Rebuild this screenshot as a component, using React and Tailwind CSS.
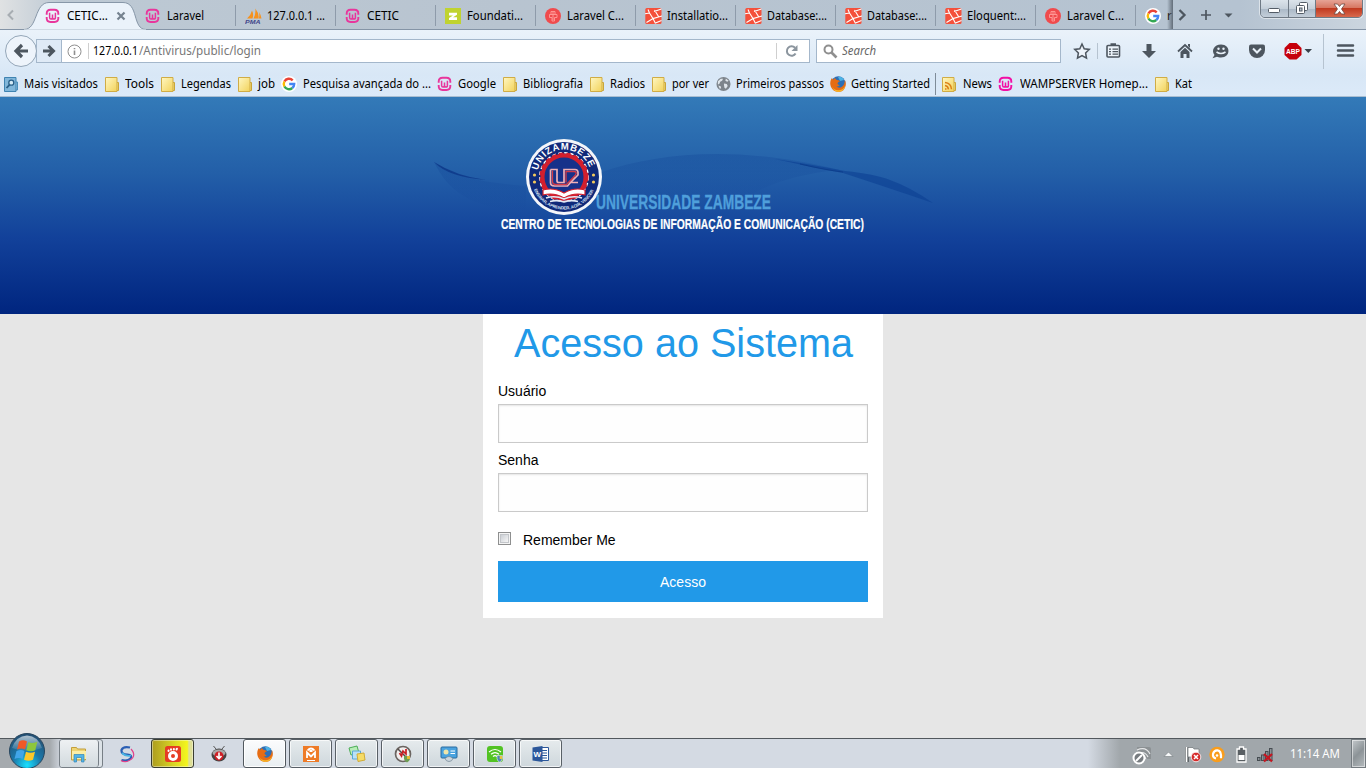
import { useLayoutEffect, useRef } from "react";

/* Text set to an exact advance width, by letter spacing or by condensing. */
function Fit({ w, spaced, stretch = 1, className = "", children }) {
  const ref = useRef(null);
  useLayoutEffect(() => {
    const el = ref.current;
    el.style.letterSpacing = "0px";
    el.style.transform = "none";
    const natural = el.getBoundingClientRect().width;
    if (!spaced) el.style.transform = `scale(${w / natural}, ${stretch})`;
    else el.style.letterSpacing = `${(w - natural) / String(children).length}px`;
  }, [w, spaced, stretch, children]);
  return (
    <span className={`block shrink-0 ${className}`} style={{ width: w }}>
      <span ref={ref} className="inline-block origin-left whitespace-nowrap">{children}</span>
    </span>
  );
}

function Wamp({ color = "#e8369c" }) {
  return (
    <svg width="16" height="16" viewBox="0 0 16 16" className="shrink-0" fill="none" stroke={color}>
      <path d="M1.700 6.800V5.500Q1.700 1.800 5.500 1.800h4Q13.300 1.800 13.300 5.500V6.800M1.700 9V10.300Q1.700 14 5.500 14h4Q13.300 14 13.300 10.300V9" strokeWidth="1.900" />
      <path d="M4.600 4.800V9.500q0 1.500 1.400 1.500t1.500-1.500V6.500V9.500q0 1.500 1.500 1.500t1.400-1.500V4.800" strokeWidth="1.500" />
    </svg>
  );
}
function GoogleG() {
  return (
    <svg width="16" height="16" viewBox="0 0 16 16" className="shrink-0" fill="none" strokeWidth="2.4">
      <circle cx="8" cy="8" r="8" fill="#fff" />
      <path d="M11.700 4.300A5.200 5.200 0 0 0 3.400 5.500" stroke="#ea4335" />
      <path d="M3.400 5.500a5.200 5.200 0 0 0 0 5" stroke="#fbbc05" />
      <path d="M3.400 10.500a5.200 5.200 0 0 0 7.900 1.500" stroke="#34a853" />
      <path d="M11.300 12A5.200 5.200 0 0 0 13.200 8H8.200" stroke="#4285f4" />
    </svg>
  );
}
function Pma() {
  return (
    <svg width="17" height="16" viewBox="0 0 17 16" className="shrink-0">
      <path d="M2 10.500Q6 7 7 2.500q2 4 .5 8zM8.500 10.500Q11 6 10.300 0.500q4 5 3.200 10zM13.800 10.500q1-3 .2-6.500 2 3 2.500 6.500z" fill="#f6921e" />
      <text x="0" y="16" fontSize="5.500" fontWeight="700" fontStyle="italic" textLength="15.500" lengthAdjust="spacingAndGlyphs" fontFamily="Liberation Sans, sans-serif" fill="#42468a">PMA</text>
    </svg>
  );
}
function Zurb() {
  return (
    <svg width="16" height="16" viewBox="0 0 16 16" className="shrink-0">
      <rect width="16" height="16" fill="#c0d330" />
      <path d="M4 4.800h8v2L8 9.300h4V12H4V10l4-2.600H4z" fill="#fff" />
    </svg>
  );
}
function LaraCasts() {
  return (
    <svg width="16" height="16" viewBox="0 0 16 16" className="shrink-0">
      <circle cx="8" cy="8" r="8" fill="#f04b4d" />
      <path d="M6 3.500h4v3h2v3H9.500V13H7V9.500H4.500v-3H6zM6 6.500h4M8 4v8" fill="none" stroke="#ff9d9a" strokeWidth=".9" />
    </svg>
  );
}
function Laravel() {
  return (
    <svg width="17" height="16" viewBox="0 0 17 16" className="shrink-0">
      <rect x=".3" y="0" width="16.200" height="16" rx="1.500" fill="#f4503b" />
      <path d="M0 5.800l4.500-.8 3.500 5.500 9-2.500M1.500 14.500l6.500-4 2.500 5M10.500 15l6-2.500M9.500 2l4 6.500M9 3.500L16.500 1M4.500 5l-1.500-3.500" fill="none" stroke="#fff" strokeWidth="1.100" />
    </svg>
  );
}
function Folder({ rss }) {
  return (
    <svg width="15" height="17" viewBox="0 0 15 17" className="shrink-0">
      <defs>
        <linearGradient id="fold" x1="0" y1="0" x2="1" y2="1">
          <stop offset="0" stopColor="#fff7c2" /><stop offset="1" stopColor="#f2d25a" />
        </linearGradient>
      </defs>
      <path d="M11 6.500h2.500v8H11z" fill="#f7e27c" stroke="#c9a53a" />
      <path d="M.5 1.500h11.500v14H.5z" fill="url(#fold)" stroke="#d0ac46" />
      {rss && <path d="M3 13h1.500M3 9.500q3 .3 3.500 3.800M3 6.500q6 .5 6.500 6.800" fill="none" stroke="#dd7f16" strokeWidth="1.500" />}
    </svg>
  );
}
function Visited() {
  return (
    <svg width="15" height="17" viewBox="0 0 15 17" className="shrink-0">
      <path d="M11 6h2.500v8H11z" fill="#9cc9e6" stroke="#4c8fbb" />
      <path d="M.5 1.500h11.500v14H.5z" fill="#80b6da" stroke="#3f83b1" />
      <circle cx="7.300" cy="6.700" r="2.500" fill="#d4eaf6" stroke="#285f88" strokeWidth="1.300" />
      <path d="M5.500 8.800L2.500 12" stroke="#285f88" strokeWidth="1.800" />
    </svg>
  );
}
function Globe() {
  return (
    <svg width="15" height="16" viewBox="0 0 16 16" className="shrink-0">
      <circle cx="8" cy="8" r="7.500" fill="#7d848b" />
      <path d="M2 5l3-2.500 2.500 0-1 2-2 1-1 2.500-1.500.5zM10.500 2l3 2.500-1.500 1-2-1zM8.500 7.500l3 .5 1 2-2 3-1.500-1-.5-3zM2.500 9.500l2.500 1 .5 2-1.500.5z" fill="#dfe5ea" />
    </svg>
  );
}
function Firefox() {
  return (
    <svg width="16" height="16" viewBox="0 0 16 16" className="shrink-0">
      <circle cx="8.300" cy="7.300" r="7" fill="#2d6fb6" />
      <path d="M8 1q4-1 6 3l-4 1z" fill="#4db2e4" />
      <path d="M1.500 2.200Q-.8 7 1 11q2.300 5 7.500 4.900 6-.3 7.200-6.400.5-3-.9-5.700.2 5-3.200 7.300-3 1.500-5.200-.8 2 .5 3.300-1-1.600-.1-2.300-1.800.8-1.800 2.600-2.200Q8.500 4 6.300 3.700 5.200 2.800 5 2q-1.200.8-1.500 1.700z" fill="#e66c14" />
      <path d="M2 10q1.500 4.500 7 4.300 4.500-.3 6.200-4.500-.5 5.500-6.700 6.100Q3 15.500 2 10z" fill="#f7b52a" />
    </svg>
  );
}

const tabs = [
  ["CETIC...", 41, Wamp], ["Laravel", 37, Wamp], ["127.0.0.1 ...", 58, Pma], ["CETIC", 32, Wamp],
  ["Foundati...", 56, Zurb], ["Laravel C...", 57, LaraCasts], ["Installatio...", 61, Laravel],
  ["Database:...", 60, Laravel], ["Database:...", 60, Laravel], ["Eloquent:...", 59, Laravel], ["Laravel C...", 57, LaraCasts],
];

function Tab({ label, width, Icon, active, index }) {
  return (
    <div className="relative flex h-[30px] w-[100px] shrink-0 items-center gap-[5px] pl-[9px] pt-[2px]">
      <span className="flex w-[17px] shrink-0"><Icon /></span>
      <Fit w={width}>{label}</Fit>
      {active && (
        <svg width="10" height="10" viewBox="0 0 10 10" className="ml-[3px] shrink-0"><path d="M1.500 1.500l7 7M8.500 1.500l-7 7" stroke="#75828f" strokeWidth="2.200" /></svg>
      )}
      {index > 0 && <span className="absolute right-0 top-[5px] h-[21px] w-px bg-[#8e9baa]" />}
    </div>
  );
}

function TabStrip() {
  return (
    <div className="relative flex h-[30px] shrink-0 border-b border-[#8494a6] bg-[linear-gradient(90deg,#e0e2e3_0px,#bdc9d4_60px,#b8c4d0_500px,#b5c3d1_1240px,#cbd5df_1366px)]">
      <svg width="125" height="30" viewBox="0 0 125 30" className="absolute left-[24px] top-0">
        <path d="M0 29.500C14 29.500 10 2.500 25 2.500H99C115 2.500 108 29.500 122 29.500" fill="#eaf2fa" stroke="#8797a8" />
        <path d="M0 30H122" stroke="#eaf2fa" strokeWidth="1" />
      </svg>
      <div className="flex w-[36px] items-center pl-[6px] pt-[1px]">
        <svg width="9" height="12" viewBox="0 0 9 12"><path d="M7 1.500L2.500 6 7 10.500" fill="none" stroke="#a7adb2" strokeWidth="2" /></svg>
      </div>
      {tabs.map(([label, width, Icon], i) => <Tab key={i} label={label} width={width} Icon={Icon} active={i === 0} index={i} />)}
      <div className="relative flex h-[30px] w-[37px] items-center gap-[6px] overflow-hidden pl-[9px] pt-[2px]">
        <GoogleG /><span>r</span>
        <span className="absolute right-0 top-0 h-[29px] w-[6px] bg-gradient-to-r from-transparent to-[#626d79]" />
      </div>
      <div className="flex flex-1 items-center pl-[4px]">
        <svg width="60" height="14" viewBox="0 0 60 14" fill="none" stroke="#4d565f" strokeWidth="2">
          <path d="M2.500 2l5 5-5 5" strokeWidth="2.300" /><path d="M24 7h10M29 2v10" strokeWidth="1.700" /><path d="M47.500 5.500h8l-4 4z" fill="#4d565f" stroke="none" />
        </svg>
      </div>
      <div className="absolute left-[1260px] top-[-1px] flex h-[19px] w-[103px] overflow-hidden rounded-b-[5px] border border-[#6f7a85] shadow-[0_0_0_1px_rgba(255,255,255,0.5)]">
        <div className="flex w-[28px] items-center justify-center border-r border-[#6f7a85] bg-[linear-gradient(#dbe3ea,#c5d0da_50%,#aab8c6_51%,#c3ced9)]">
          <svg width="13" height="6" className="mt-[4px]"><rect x=".5" y=".5" width="11" height="4" rx="1" fill="#fff" stroke="#535c66" /></svg>
        </div>
        <div className="flex w-[27px] items-center justify-center border-r border-[#6f7a85] bg-[linear-gradient(#dbe3ea,#c5d0da_50%,#aab8c6_51%,#c3ced9)]">
          <svg width="13" height="13" viewBox="0 0 13 13" fill="#fff" stroke="#535c66"><rect x="3.500" y=".5" width="8" height="8" rx="1" /><rect x=".5" y="3.500" width="8" height="8" rx="1" /><rect x="3.500" y="6" width="2.500" height="3" fill="#b6c2ce" /></svg>
        </div>
        <div className="flex flex-1 items-center justify-center bg-[linear-gradient(#e6a395,#d77762_45%,#c13a20_50%,#d8694d)]">
          <svg width="13" height="12" viewBox="0 0 13 12"><path d="M1 1h3.500l2 2.500 2-2.500H12L8.500 6l3.500 5H8.500l-2-2.500-2 2.500H1l3.500-5z" fill="#fff" stroke="#6c4640" strokeWidth=".8" /></svg>
        </div>
      </div>
    </div>
  );
}

function Toolbar() {
  return (
    <div className="flex h-[42px] shrink-0 items-center">
      <div className="relative ml-[36px] flex h-[24px] w-[25px] items-center border border-r-0 border-[#a4b7cb] bg-[#dfeaf6] pl-[5px]">
        <svg width="14" height="14" viewBox="0 0 14 14"><path d="M1 7h9M6.500 2l5 5-5 5" fill="none" stroke="#4d565f" strokeWidth="3" /></svg>
        <div className="absolute left-[-32px] top-[-5px] flex h-[32px] w-[32px] items-center justify-center rounded-full border border-[#94a6b8] bg-[#eef4fb]">
          <svg width="16" height="16" viewBox="0 0 16 16"><path d="M15 8H4M9 2L3 8l6 6" fill="none" stroke="#4d565f" strokeWidth="3.200" /></svg>
        </div>
      </div>
      <div className="flex h-[24px] w-[749px] items-center border border-[#a4b7cb] bg-white pl-[5px]">
        <svg width="15" height="15" viewBox="0 0 15 15" fill="none" stroke="#8f8f8f"><circle cx="7.500" cy="7.500" r="6.500" /><path d="M7.500 6.500V11M7.500 4v1.300" strokeWidth="1.600" /></svg>
        <span className="ml-[6px] h-[16px] w-px bg-[#cfcfcf]" />
        <Fit w={45} className="ml-[4px]">127.0.0.1</Fit>
        <Fit w={122} className="ml-px text-[#777]">/Antivirus/public/login</Fit>
        <span className="ml-auto h-[16px] w-px bg-[#cfcfcf]" />
        <svg width="32" height="14" viewBox="0 0 32 14"><path d="M18.600 9.500A4.700 4.700 0 1 1 18 3.800" fill="none" stroke="#8b959e" strokeWidth="2" /><path d="M20.500 1v6h-6z" fill="#8b959e" /></svg>
      </div>
      <div className="ml-[6px] flex h-[24px] w-[245px] items-center border border-[#a4b7cb] bg-white pl-[6px]">
        <svg width="15" height="15" viewBox="0 0 15 15" fill="none" stroke="#8f8f8f"><circle cx="5.500" cy="5.500" r="4" strokeWidth="2" /><path d="M8.500 8.500l5 5" strokeWidth="2.700" /></svg>
        <Fit w={34} className="ml-[4px] italic text-[#666]">Search</Fit>
      </div>
      <svg width="305" height="40" viewBox="1061 30 305 40" className="shrink-0">
        <path d="M1082 43l2.200 4.700 5.100.7-3.700 3.600.9 5.100-4.500-2.500-4.500 2.500.9-5.100-3.700-3.600 5.100-.7z" fill="#eef4fb" stroke="#4d565f" strokeWidth="1.500" />
        <path d="M1097.500 42v16M1323.500 33v35" stroke="#b6c3d0" />
        <g fill="none" stroke="#4d565f"><rect x="1107" y="44.500" width="12.500" height="11.500" rx="1" strokeWidth="1.600" fill="#edf4fb" /><path d="M1110.500 43.500h5.500" strokeWidth="2.500" /><path d="M1109 48.200h2M1112.500 48.200h5.500M1109 50.700h2M1112.500 50.700h5.500M1109 53.200h2M1112.500 53.200h5.500" strokeWidth="1.200" /></g>
        <path d="M1146.500 43h5v7h4.500l-7 7-7-7h4.500z" fill="#4d565f" />
        <path d="M1178 50.500l7-6.500 7 6.500" fill="none" stroke="#4d565f" strokeWidth="1.800" />
        <path d="M1180.500 51l4.500-4.200 4.500 4.200v6h-3v-4h-3v4h-3zM1188 43h2v4l-2-2z" fill="#4d565f" />
        <path d="M1221 43.500c10 0 10 13 0 13-2 0-3-.4-4-.8l-4.500 1.500 2-3.300c-3.500-4-.5-10.400 6.500-10.400z" fill="#4d565f" />
        <path d="M1216.500 51q4.500 3 9 0" fill="none" stroke="#e9f1f9" strokeWidth="1.600" /><circle cx="1218.500" cy="47.700" r="1.200" fill="#e9f1f9" /><circle cx="1223.500" cy="47.700" r="1.200" fill="#e9f1f9" />
        <path d="M1251 43.500h12q2 0 2 2v3.500a8 8 0 0 1-16 0v-3.500q0-2 2-2z" fill="#4d565f" /><path d="M1253 47.500l4 4 4-4" fill="none" stroke="#e9f1f9" strokeWidth="2" />
        <path d="M1289.500 42h7l5 5v7l-5 4.500h-7l-5-4.500v-7z" fill="#c5000b" />
        <text x="1286" y="53" textLength="14" lengthAdjust="spacingAndGlyphs" fontFamily="Liberation Sans, sans-serif" fontSize="7" fontWeight="700" fill="#fff">ABP</text>
        <path d="M1304.500 48h7.500l-3.700 4z" fill="#39424b" />
        <path d="M1338 44.500h15M1338 49.500h15M1338 54.500h15" stroke="#4d565f" strokeWidth="2.500" strokeLinecap="round" />
      </svg>
    </div>
  );
}

const bookmarks = [
  [Visited, 20, "Mais visitados", 74, 7], [Folder, 20, "Tools", 29, 7], [Folder, 20, "Legendas", 50, 7], [Folder, 20, "job", 17, 6],
  [GoogleG, 22, "Pesquisa avançada do ...", 128, 6], [Wamp, 21, "Google", 38, 7], [Folder, 20, "Bibliografia", 60, 7],
  [Folder, 20, "Radios", 35, 7], [Folder, 20, "por ver", 37, 7], [Globe, 20, "Primeiros passos", 88, 6], [Firefox, 21, "Getting Started", 79, 5],
];
function Bookmark({ Icon, cell, label, width, gap, rss, color }) {
  return (
    <div className="flex shrink-0 items-center">
      <span className="flex shrink-0" style={{ width: cell }}>{rss ? <Icon rss /> : <Icon color={color} />}</span>
      <Fit w={width}>{label}</Fit>
      <span className="shrink-0" style={{ width: gap }} />
    </div>
  );
}

function Banner() {
  return (
    <header className="flex h-[217px] shrink-0 justify-center bg-[linear-gradient(#337ab8,#235fa8_35%,#12419a_65%,#00257f)]">
      <div className="relative mt-[20px] h-[130px] w-[500px]">
        <svg width="500" height="130" viewBox="433 117 500 130" className="absolute left-0 top-0">
          <defs>
            <linearGradient id="veil" x1="0" y1="0" x2="0" y2="1"><stop offset="0" stopColor="#0b3b90" stopOpacity=".25" /><stop offset="1" stopColor="#0b3b90" stopOpacity="0" /></linearGradient>
            <path id="seal-top" d="M537.700 170.500A27 27 0 0 1 590.300 170.500" />
            <path id="seal-bottom" d="M534 189.500A32.500 32.500 0 0 0 594 189.500" />
          </defs>
          <path d="M434 162C460 178 480 182 526 186v26C475 208 450 195 434 162z" fill="url(#veil)" />
          <path d="M434 162q22 14 52 18-38-3-52-18z" fill="#062b7f" opacity=".6" />
          <path d="M602 172C660 152 740 145 840 170q-60 5-100 31h-138z" fill="url(#veil)" />
          <path d="M775 159Q815 165 845 171Q875 174 890 180q20 7 43 23-50-17-90-30Q810 167 775 159z" fill="#0b3f93" opacity=".6" />
          <path d="M800 164q25 6 43 8" stroke="#093684" opacity=".6" fill="none" />
          <circle cx="564" cy="177" r="38" fill="#f4f6fa" />
          <circle cx="564" cy="177" r="35" fill="#10297a" />
          <circle cx="564" cy="177" r="24.300" fill="none" stroke="#fff" strokeWidth="1.400" strokeDasharray="3.500 2.500" />
          <circle cx="564" cy="177" r="21.500" fill="#16318a" stroke="#d31f2d" strokeWidth="4" />
          <circle cx="564" cy="177" r="23.500" fill="none" stroke="#d31f2d" strokeWidth="2" strokeDasharray="4.500 3" />
          <path d="M543 190q11-3 21 3 10-6 21-3v5q-11-3-21 3-10-6-21-3z" fill="#fff" stroke="#d31f2d" strokeWidth="1.200" />
          <path d="M546 198q9-3 18 1 9-4 18-1M550 201.500q7-2 14 .5 7-2.500 14-.5" fill="none" stroke="#e3e9f5" strokeWidth="1.600" />
          <path d="M550.500 169.500h6.500v11.500q0 1.500 2 1.500h5v-13h11q3 0 3 3v2.500l-7.500 7.500h7.500M550.500 169.500v13q0 3.500 4 3.500h13l8-9" fill="none" stroke="#eeb0b7" strokeWidth="1.700" />
          <path d="M552.500 170.500v11q0 3 3 3h11l9-9.500q2-3.500-1.500-3.500h-8v11" stroke="#d13b49" strokeWidth="1.300" fill="none" />
          <text fill="#fff" fontFamily="Liberation Sans, sans-serif" fontWeight="700" fontSize="9.500"><textPath href="#seal-top" textLength="69">UNIZAMBEZE</textPath></text>
          <text fill="#dbe4f5" fontFamily="Liberation Sans, sans-serif" fontWeight="700" fontSize="4.300"><textPath href="#seal-bottom" textLength="75">ENSINAR, APRENDER, AGIR, VENCER</textPath></text>
          <g fill="#f3c85b"><circle cx="534.500" cy="175" r="1.600" /><circle cx="534.500" cy="182" r="1.600" /><circle cx="593.500" cy="175" r="1.600" /><circle cx="593.500" cy="182" r="1.600" /></g>
        </svg>
        <div className="relative flex flex-col pt-[74px] font-['Liberation_Sans',sans-serif] font-bold">
          <Fit w={175} stretch={1.03} className="ml-[163px] text-[20px] leading-[22px] text-[#4f9fdb] [-webkit-text-stroke:0.3px_#4f9fdb]">UNIVERSIDADE ZAMBEZE</Fit>
          <Fit w={363} stretch={1.05} className="ml-[68px] mt-[2px] text-[14px] leading-[18px] text-white [-webkit-text-stroke:0.2px_white]">CENTRO DE TECNOLOGIAS DE INFORMAÇÃO E COMUNICAÇÃO (CETIC)</Fit>
        </div>
      </div>
    </header>
  );
}

function Login() {
  return (
    <main className="flex h-[424px] shrink-0 justify-center bg-[#e6e6e6] font-['Liberation_Sans',Arial,sans-serif] text-[14px] text-black">
      <form className="flex h-[304px] w-[400px] flex-col bg-white px-[15px]">
        <h1 className="mt-[1px] flex h-[55px] justify-center text-[39.375px] leading-[55px] text-[#2199e8]"><Fit w={339} stretch={1.04}>Acesso ao Sistema</Fit></h1>
        <label className="mt-[10px] h-[24px] leading-[23px]">Usuário</label>
        <input className="h-[39px] w-full border border-[#cacaca] bg-[#fefefe] shadow-[inset_0_1px_2px_rgba(10,10,10,0.1)]" />
        <label className="mt-[6px] h-[24px] leading-[23px]">Senha</label>
        <input className="h-[39px] w-full border border-[#cacaca] bg-[#fefefe] shadow-[inset_0_1px_2px_rgba(10,10,10,0.1)]" />
        <div className="mt-[17px] flex h-[21px] items-center">
          <span className="mb-[2px] flex h-[13px] w-[13px] items-center justify-center border border-[#8e8f8f] bg-[#f4f4f4]"><span className="h-[9px] w-[9px] border border-[#c3c6ca] bg-gradient-to-br from-[#cbcfd5] to-[#f6f6f6]" /></span>
          <span className="ml-[12px]">Remember Me</span>
        </div>
        <button type="button" className="mt-[11px] h-[41px] bg-[#2199e8] text-center leading-[42px] text-white">Acesso</button>
      </form>
    </main>
  );
}

function TaskIcon({ kind }) {
  const s = { width: 18, height: 18, viewBox: "0 0 18 18", className: "shrink-0" };
  switch (kind) {
    case "explorer": return <svg {...s}><path d="M1.500 4V2.500h5l1 1.500h8v11h-14z" fill="#efd573" stroke="#c39f3c" /><path d="M2 6h14v8H2z" fill="#fbeea6" /><path d="M4 17V9.500h10V17h-2.500v-4.500h-5V17z" fill="#53b4e6" stroke="#3186b8" strokeWidth=".7" /></svg>;
    case "swirl": return <svg {...s} fill="none"><path d="M12 2.500Q5 1 3.500 5q-.5 4.500 6 4.500 5 .5 3 4-3 3-9 1.500" stroke="#2b5fb4" strokeWidth="2.200" /><path d="M13 4q7 8-4 12.500-4 .5-6-1" stroke="#e2418c" strokeWidth="1.200" /><path d="M4 8q4 4 9 2.500" stroke="#48b3e4" strokeWidth="1.800" /></svg>;
    case "gom": return <svg {...s}><rect x="1" y="1" width="16" height="16" rx="2.500" fill="#e63c23" /><circle cx="9" cy="11" r="3.500" fill="none" stroke="#fff" strokeWidth="3" /><path d="M4.500 6l.1-.5M7 4.800l0-.6M9.800 4.500l.1-.5M12.500 4.500l.4-.8" stroke="#fff" strokeWidth="2" strokeLinecap="round" /></svg>;
    case "atube": return <svg {...s}><path d="M6 4L3.500 1M12 4l2.500-3" stroke="#575757" /><ellipse cx="9" cy="10" rx="7.500" ry="6.500" fill="#454545" /><ellipse cx="9" cy="8" rx="6.500" ry="3.500" fill="#a9a9a9" /><circle cx="9" cy="11" r="4.500" fill="#cf1e25" /><path d="M9 7.500v6M6.500 11l2.500 2.500 2.500-2.500" stroke="#fff" strokeWidth="1.600" fill="none" /></svg>;
    case "firefox": return <Firefox />;
    case "mendeley": return <svg {...s}><rect x="1" y="1" width="16" height="16" fill="#ee7b27" /><path d="M5 13V7.500l4 4 4-4V13M5.500 5.500Q9 1.500 12.500 5.500M7.500 6h3" fill="none" stroke="#fff" strokeWidth="1.800" /><path d="M5 15.500h8" stroke="#fff" /></svg>;
    case "notes": return <svg {...s}><path d="M1 3l8-2 2 7-8 2z" fill="#b8edb7" stroke="#4cae56" /><path d="M4.500 6h8v8h-8z" fill="#b9e1f6" stroke="#5aa8d6" /><path d="M9 9l7-1 1 7-7 1.500z" fill="#f6dc67" stroke="#d0ac37" /></svg>;
    case "block": return <svg {...s}><circle cx="9" cy="9" r="7.500" fill="#f2efee" stroke="#6b6561" strokeWidth="1.700" /><path d="M4 4l10 10" stroke="#524c4a" strokeWidth="1.500" /><path d="M5.500 8l2 3 1.500-5 3 3V4" fill="none" stroke="#c91e23" strokeWidth="1.700" /><path d="M10 11h6v3q-1 3-3 3.500-2-.5-3-3.500z" fill="#6c9e52" /><path d="M13 11h3v3h-3z" fill="#e3bc33" /></svg>;
    case "monitor": return <svg {...s}><rect x="1" y="2" width="16" height="11" rx="1" fill="#4aa3df" stroke="#286b9f" /><circle cx="6" cy="7" r="2.500" fill="#efe5a9" /><path d="M10.500 6h4.500M10.500 8.500h4.500" stroke="#fff" /><path d="M5 13.500q4-4 8 0-1 3-4 3t-4-3z" fill="#ccd6de" stroke="#708492" strokeWidth=".7" /></svg>;
    case "wifi": return <svg {...s}><rect x="1" y="1" width="16" height="16" rx="3" fill="#52c324" /><path d="M3 7q6-5 12 0M5 9.300q4-3.500 8 0M7 11.500q2-1.800 4 0" fill="none" stroke="#fff" strokeWidth="1.200" /><path d="M11 10.500h5.500v3q-1 3-3 3.500-2-.5-2.500-3.500z" fill="#4c86b5" stroke="#eee" strokeWidth=".6" /><path d="M13.700 11h2.500v3h-2.500z" fill="#e8c341" /></svg>;
    default: return <svg {...s}><path d="M9 2.500h7.500v13H9z" fill="#fff" stroke="#2b579a" /><path d="M10 5.500h5M10 8h5M10 10.500h5M10 13h5" stroke="#2b579a" strokeWidth="1.200" /><path d="M.5 2.500L10.500 1v16L.5 15.500z" fill="#2b579a" /><text x="1.500" y="12" fontFamily="Liberation Sans, sans-serif" fontWeight="700" fontSize="8" fill="#fff">W</text></svg>;
  }
}

function TaskButton({ kind, plain, yellow, light }) {
  const base = "flex h-[29px] w-[43px] shrink-0 items-center justify-center pt-[1px]";
  const look = plain ? "" : yellow
    ? "rounded-[3px] border border-[#3a3d32] bg-[linear-gradient(90deg,#ad9d20,#dfdc24_60%,#f4f61c_86%,#dedf95_90%)] shadow-[inset_0_0_0_1px_rgba(255,255,255,0.4)]"
    : light
      ? "rounded-[3px] border border-[#51585e] bg-[linear-gradient(#fbfcfd,#e9eef1)] shadow-[inset_0_0_0_1px_white]"
      : "rounded-[3px] border border-[#596067] bg-[linear-gradient(#e6ebed,#ced7dc)] shadow-[inset_0_0_0_1px_rgba(255,255,255,0.7)]";
  return <div className={`${base} ${look}`}><TaskIcon kind={kind} /></div>;
}

function Taskbar() {
  return (
    <footer className="relative flex h-[30px] shrink-0 border-t border-[#52585d] bg-[linear-gradient(90deg,#a5aaae_0px,#a5aaae_50px,#d4dae3_62px,#d4dae3_1088px,#a1a7ab_1120px,#a1a7ab_1366px)]">
      <svg width="38" height="36" viewBox="0 0 38 36" className="absolute left-[8px] top-[-7px]">
        <defs>
          <radialGradient id="orb" cx=".5" cy=".9" r=".9"><stop offset="0" stopColor="#18e0ff" /><stop offset=".45" stopColor="#1b78a9" /><stop offset="1" stopColor="#244d70" /></radialGradient>
          <linearGradient id="shine" x1="0" y1="0" x2="0" y2="1"><stop offset="0" stopColor="#fff" stopOpacity=".65" /><stop offset="1" stopColor="#fff" stopOpacity=".05" /></linearGradient>
        </defs>
        <circle cx="19" cy="19" r="17.500" fill="url(#orb)" stroke="#28465e" />
        <path d="M4 16Q8 4 19 3.500 30 4 34 16 19 22 4 16z" fill="url(#shine)" />
        <path d="M11 9.500q4-2.500 8 0l-2 8q-3.500-2-8 0z" fill="#ef5827" />
        <path d="M20.300 10.300q4 1.800 9-.6l-2 8.500q-4 2-9 0z" fill="#8dc63c" />
        <path d="M8.500 19q4.500-2 8 0l-2 8q-3.500-2-8 0z" fill="#41a5e8" />
        <path d="M18 19.800q4.500 2 9 0l-2 8q-4.500 2-9 0z" fill="#fdc82a" />
      </svg>
      <div className="ml-[59px] flex w-[44px] rounded-[3px] border border-[#777f86] bg-[#dce2e7]">
        <div className="flex w-[39px] items-center justify-center rounded-[3px] border-r border-[#777f86] bg-[linear-gradient(#eef1f3,#d2dade)]"><TaskIcon kind="explorer" /></div>
      </div>
      <div className="ml-[2px] flex gap-[3px]">
        <TaskButton kind="swirl" plain /><TaskButton kind="gom" yellow /><TaskButton kind="atube" plain /><TaskButton kind="firefox" light />
        <TaskButton kind="mendeley" /><TaskButton kind="notes" /><TaskButton kind="block" /><TaskButton kind="monitor" /><TaskButton kind="wifi" /><TaskButton kind="word" />
      </div>
      <div className="ml-auto flex items-center">
        <svg width="150" height="26" viewBox="1130 741 150 26" className="mr-[10px]">
          <path d="M1137 747h12q2 0 2 2v10h-12z" fill="#8c9194" />
          <path d="M1137 750q9-4 13 4M1139 753q6-2 9 4M1141 756q3-1 5 3" fill="none" stroke="#e7e9ea" strokeWidth="1.200" />
          <circle cx="1139" cy="758" r="5.500" fill="#777c80" stroke="#fff" strokeWidth="2" /><path d="M1136 761l6-6" stroke="#fff" strokeWidth="2" />
          <path d="M1164 756.500l4.500-4.500 4.500 4.500z" fill="#f7f9fa" stroke="#767c80" strokeWidth=".6" />
          <path d="M1187 747v15" stroke="#5f6468" strokeWidth="4" /><path d="M1186.500 747v15" stroke="#fff" strokeWidth="1.700" /><path d="M1188 747.500h5l1 1.500h5v8h-11z" fill="#fff" stroke="#6d7377" strokeWidth=".7" />
          <circle cx="1196" cy="757" r="4.800" fill="#d62c2c" stroke="#fff" strokeWidth=".8" /><path d="M1194 755l4 4M1198 755l-4 4" stroke="#fff" strokeWidth="1.500" />
          <circle cx="1217" cy="754.500" r="7.700" fill="#f99d1c" /><path d="M1216 758.500q-3.500-1-3-4.500 1-4 4.500-3.700 4 .5 3.500 8" fill="none" stroke="#fff" strokeWidth="2.200" /><circle cx="1217" cy="755.500" r="1.300" fill="#fff" />
          <path d="M1239.500 747h4v2h2.500v13h-9v-13h2.500z" fill="#595f63" stroke="#fff" strokeWidth="1.300" /><path d="M1238.500 755h6v5h-6z" fill="#fff" />
          <g fill="#8c9296" stroke="#464d52" strokeWidth="1"><rect x="1257.500" y="757.500" width="2.500" height="3" /><rect x="1261.500" y="755" width="2.500" height="5.500" /><rect x="1265.500" y="751.500" width="2.500" height="9" /><rect x="1269.500" y="748.500" width="2.500" height="12" /></g>
          <path d="M1264 754l8 7.500M1272 754l-8 7.500" stroke="#c51520" strokeWidth="2.200" />
        </svg>
        <Fit w={50} className="text-white">11:14 AM</Fit>
        <div className="ml-[11px] h-[29px] w-[15px] border border-[#737a7f] bg-[linear-gradient(135deg,#c4c9cc,#8c9397_50%,#b5bbbe)] shadow-[inset_0_0_0_1px_rgba(255,255,255,0.5)]" />
      </div>
    </footer>
  );
}

export default function App() {
  return (
    <div className="flex h-[768px] w-[1366px] flex-col overflow-hidden bg-[#e6e6e6] font-['Noto_Sans',sans-serif] text-[12px] leading-[16px] text-black">
      <div className="flex h-[97px] shrink-0 flex-col border-b border-[#a9bed2] bg-[linear-gradient(#eaf2fa_30px,#d8e7f6_75px,#dceaf9)]">
        <TabStrip />
        <Toolbar />
        <nav className="flex h-[24px] shrink-0 items-center pl-[4px]">
          {bookmarks.map(([Icon, cell, label, width, gap]) => <Bookmark key={label} Icon={Icon} cell={cell} label={label} width={width} gap={gap} />)}
          <span className="mr-[6px] h-[22px] w-px shrink-0 bg-[#7f8c99]" />
          <Bookmark Icon={Folder} rss cell={21} label="News" width={29} gap={6} />
          <Bookmark Icon={Wamp} color="#f20fa5" cell={22} label="WAMPSERVER Homep..." width={128} gap={7} />
          <Bookmark Icon={Folder} cell={20} label="Kat" width={17} gap={0} />
        </nav>
      </div>
      <Banner />
      <Login />
      <Taskbar />
    </div>
  );
}
